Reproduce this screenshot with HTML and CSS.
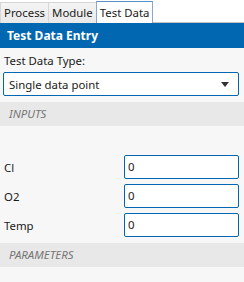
FILE: index.html
```html
<!DOCTYPE html>
<html lang="en">
<head>
    <meta charset="UTF-8">
    <title>Test Data</title>
    <link rel="stylesheet" href="styles.css">
</head>
<body>
    <div class="tabs">
        <div class="tab">Process</div>
        <div class="tab">Module</div>
        <div class="tab active">Test Data</div>
    </div>

    <div class="panel">
        <div class="panel-title">Test Data Entry</div>

        <div class="field-label">Test Data Type:</div>
        <div class="select">
            <span>Single data point</span>
            <span class="select-arrow"></span>
        </div>

        <div class="section">INPUTS</div>

        <div class="inputs">
            <div class="input-row">
                <span>Cl</span>
                <div class="text-box">0</div>
            </div>
            <div class="input-row">
                <span>O2</span>
                <div class="text-box">0</div>
            </div>
            <div class="input-row">
                <span>Temp</span>
                <div class="text-box">0</div>
            </div>
        </div>

        <div class="section">PARAMETERS</div>
    </div>
</body>
</html>
```

FILE: styles.css
```css
:root {
    --blue: #0067b0;
    --panel-bg: #f7f7f7;
    --band-bg: #e8e8e8;
    --text: #1a1a1a;
}

* {
    margin: 0;
    padding: 0;
    box-sizing: border-box;
}

body {
    font-family: 'Noto Sans', 'Open Sans', sans-serif;
    font-size: 11.4px;
    color: var(--text);
    background-color: var(--panel-bg);
    width: 244px;
    height: 282px;
    overflow: hidden;
}

.tabs {
    display: flex;
    height: 23px;
    padding-top: 2px;
    background-color: #ffffff;
    border-bottom: 1px solid #c4c4c4;
}

.tab {
    height: 21px;
    padding: 0 3px;
    line-height: 19px;
    border: 1px solid #d6d6d6;
    border-bottom: none;
    background: linear-gradient(#f4f4f4, #e9e9e9);
}

.tab + .tab {
    margin-left: -1px;
}

.tab.active {
    margin-top: -1px;
    height: 22px;
    line-height: 21px;
    background: #ffffff;
    border-color: #8aa9c8;
    border-top-color: #5b8fc4;
}

.panel-title {
    height: 25px;
    line-height: 25px;
    padding-left: 7px;
    background-color: var(--blue);
    color: #ffffff;
    font-weight: bold;
    font-size: 12px;
}

.field-label {
    height: 22px;
    line-height: 21px;
    padding-left: 4px;
    margin-top: 2px;
}

.select {
    display: flex;
    align-items: center;
    justify-content: space-between;
    height: 24px;
    margin: 0 5px 0 3px;
    padding: 0 9px 0 5px;
    background-color: #ffffff;
    border: 1px solid var(--blue);
    border-radius: 2px;
}

.select-arrow {
    width: 0;
    height: 0;
    border-left: 4px solid transparent;
    border-right: 4px solid transparent;
    border-top: 5px solid #333333;
}

.section {
    height: 24px;
    line-height: 24px;
    margin-top: 6px;
    padding-left: 9px;
    background-color: var(--band-bg);
    color: #767676;
    font-style: italic;
}

.inputs {
    display: flex;
    flex-direction: column;
    gap: 5px;
    padding: 29px 5px 0 4px;
}

.input-row {
    display: flex;
    align-items: center;
    justify-content: space-between;
}

.text-box {
    width: 115px;
    height: 24px;
    line-height: 22px;
    padding-left: 3px;
    background-color: #ffffff;
    border: 1px solid var(--blue);
    border-radius: 2px;
}
```
